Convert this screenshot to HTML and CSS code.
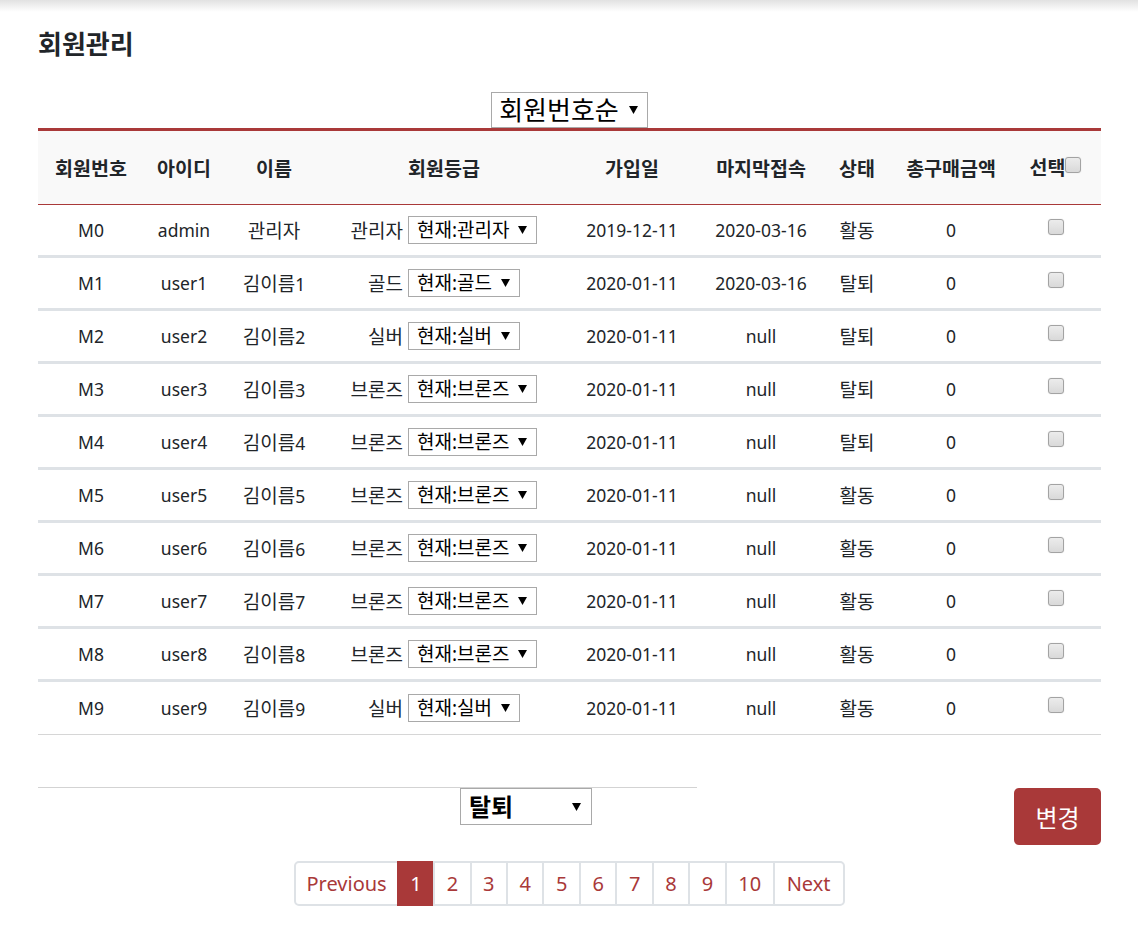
FILE: index.html
```html
<!DOCTYPE html>
<html lang="ko">
<head>
<meta charset="utf-8">
<title>회원관리</title>
<link rel="stylesheet" href="styles.css">
</head>
<body>
<div class="topbar"></div>
<div class="container">
  <h4 class="title">회원관리</h4>
  <div class="sort-wrap">
    <div class="sel sel-sort"><span class="sel-text">회원번호순</span><svg class="arrow" width="9" height="8" viewBox="0 0 9 8"><polygon points="0,0 9,0 4.5,8" fill="#000"/></svg></div>
  </div>
  <table class="members">
    <colgroup>
      <col style="width:106px"><col style="width:80px"><col style="width:100px"><col style="width:240px"><col style="width:136px"><col style="width:122px"><col style="width:70px"><col style="width:118px"><col style="width:91px">
    </colgroup>
    <thead>
      <tr>
        <th>회원번호</th><th>아이디</th><th>이름</th><th>회원등급</th><th>가입일</th><th>마지막접속</th><th>상태</th><th>총구매금액</th><th>선택<span class="cb cb-head"></span></th>
      </tr>
    </thead>
    <tbody>
      <tr><td>M0</td><td>admin</td><td class="ko">관리자</td><td><span class="grade"><span class="ko">관리자</span><span class="sel sel-row"><span class="sel-text">현재:관리자</span><svg class="arrow" width="9" height="8" viewBox="0 0 9 8"><polygon points="0,0 9,0 4.5,8" fill="#000"/></svg></span></span></td><td>2019-12-11</td><td>2020-03-16</td><td class="ko">활동</td><td>0</td><td><span class="cb"></span></td></tr>
      <tr><td>M1</td><td>user1</td><td><span class="ko">김이름</span>1</td><td><span class="grade"><span class="ko">골드</span><span class="sel sel-row"><span class="sel-text">현재:골드</span><svg class="arrow" width="9" height="8" viewBox="0 0 9 8"><polygon points="0,0 9,0 4.5,8" fill="#000"/></svg></span></span></td><td>2020-01-11</td><td>2020-03-16</td><td class="ko">탈퇴</td><td>0</td><td><span class="cb"></span></td></tr>
      <tr><td>M2</td><td>user2</td><td><span class="ko">김이름</span>2</td><td><span class="grade"><span class="ko">실버</span><span class="sel sel-row"><span class="sel-text">현재:실버</span><svg class="arrow" width="9" height="8" viewBox="0 0 9 8"><polygon points="0,0 9,0 4.5,8" fill="#000"/></svg></span></span></td><td>2020-01-11</td><td>null</td><td class="ko">탈퇴</td><td>0</td><td><span class="cb"></span></td></tr>
      <tr><td>M3</td><td>user3</td><td><span class="ko">김이름</span>3</td><td><span class="grade"><span class="ko">브론즈</span><span class="sel sel-row"><span class="sel-text">현재:브론즈</span><svg class="arrow" width="9" height="8" viewBox="0 0 9 8"><polygon points="0,0 9,0 4.5,8" fill="#000"/></svg></span></span></td><td>2020-01-11</td><td>null</td><td class="ko">탈퇴</td><td>0</td><td><span class="cb"></span></td></tr>
      <tr><td>M4</td><td>user4</td><td><span class="ko">김이름</span>4</td><td><span class="grade"><span class="ko">브론즈</span><span class="sel sel-row"><span class="sel-text">현재:브론즈</span><svg class="arrow" width="9" height="8" viewBox="0 0 9 8"><polygon points="0,0 9,0 4.5,8" fill="#000"/></svg></span></span></td><td>2020-01-11</td><td>null</td><td class="ko">탈퇴</td><td>0</td><td><span class="cb"></span></td></tr>
      <tr><td>M5</td><td>user5</td><td><span class="ko">김이름</span>5</td><td><span class="grade"><span class="ko">브론즈</span><span class="sel sel-row"><span class="sel-text">현재:브론즈</span><svg class="arrow" width="9" height="8" viewBox="0 0 9 8"><polygon points="0,0 9,0 4.5,8" fill="#000"/></svg></span></span></td><td>2020-01-11</td><td>null</td><td class="ko">활동</td><td>0</td><td><span class="cb"></span></td></tr>
      <tr><td>M6</td><td>user6</td><td><span class="ko">김이름</span>6</td><td><span class="grade"><span class="ko">브론즈</span><span class="sel sel-row"><span class="sel-text">현재:브론즈</span><svg class="arrow" width="9" height="8" viewBox="0 0 9 8"><polygon points="0,0 9,0 4.5,8" fill="#000"/></svg></span></span></td><td>2020-01-11</td><td>null</td><td class="ko">활동</td><td>0</td><td><span class="cb"></span></td></tr>
      <tr><td>M7</td><td>user7</td><td><span class="ko">김이름</span>7</td><td><span class="grade"><span class="ko">브론즈</span><span class="sel sel-row"><span class="sel-text">현재:브론즈</span><svg class="arrow" width="9" height="8" viewBox="0 0 9 8"><polygon points="0,0 9,0 4.5,8" fill="#000"/></svg></span></span></td><td>2020-01-11</td><td>null</td><td class="ko">활동</td><td>0</td><td><span class="cb"></span></td></tr>
      <tr><td>M8</td><td>user8</td><td><span class="ko">김이름</span>8</td><td><span class="grade"><span class="ko">브론즈</span><span class="sel sel-row"><span class="sel-text">현재:브론즈</span><svg class="arrow" width="9" height="8" viewBox="0 0 9 8"><polygon points="0,0 9,0 4.5,8" fill="#000"/></svg></span></span></td><td>2020-01-11</td><td>null</td><td class="ko">활동</td><td>0</td><td><span class="cb"></span></td></tr>
      <tr class="last"><td>M9</td><td>user9</td><td><span class="ko">김이름</span>9</td><td><span class="grade"><span class="ko">실버</span><span class="sel sel-row"><span class="sel-text">현재:실버</span><svg class="arrow" width="9" height="8" viewBox="0 0 9 8"><polygon points="0,0 9,0 4.5,8" fill="#000"/></svg></span></span></td><td>2020-01-11</td><td>null</td><td class="ko">활동</td><td>0</td><td><span class="cb"></span></td></tr>
    </tbody>
  </table>
  <div class="bottom-row">
    <div class="bottom-left">
      <div class="sel sel-status"><span class="sel-text">탈퇴</span><svg class="arrow" width="9" height="8" viewBox="0 0 9 8"><polygon points="0,0 9,0 4.5,8" fill="#000"/></svg></div>
    </div>
    <button class="btn-change">변경</button>
  </div>
  <ul class="pagination">
    <li><a class="page-link prev">Previous</a></li>
    <li><a class="page-link active">1</a></li>
    <li><a class="page-link">2</a></li>
    <li><a class="page-link">3</a></li>
    <li><a class="page-link">4</a></li>
    <li><a class="page-link">5</a></li>
    <li><a class="page-link">6</a></li>
    <li><a class="page-link">7</a></li>
    <li><a class="page-link">8</a></li>
    <li><a class="page-link">9</a></li>
    <li><a class="page-link">10</a></li>
    <li><a class="page-link next">Next</a></li>
  </ul>
</div>
</body>
</html>
```
FILE: styles.css
```css
* { box-sizing: border-box; }
body {
  margin: 0;
  background: #fff;
  color: #212529;
  font-family: "Noto Sans", "Noto Sans CJK KR", sans-serif;
}
.topbar {
  height: 12px;
  background: linear-gradient(#e1e1e1, #ffffff);
}
.container {
  padding: 0 37px 0 38px;
}
.title {
  margin: 17px 0 0 0;
  font-size: 26px;
  line-height: 30px;
  font-weight: 700;
  color: #212529;
}
.sort-wrap {
  margin-top: 33px;
  text-align: center;
  line-height: 0;
}
.sel {
  display: inline-flex;
  align-items: center;
  border: 1px solid #a9a9a9;
  background: #fff;
  color: #000;
  white-space: nowrap;
}
.sel .arrow { flex: none; }
.sel-sort {
  height: 36px;
  padding: 0 9px 0 7px;
  font-size: 26px;
  line-height: 34px;
}
.sel-sort .arrow { margin-left: 10px; }
.grade {
  display: inline-flex;
  align-items: center;
  vertical-align: middle;
}
.ko { font-size: 19px; }
.sel-row {
  height: 28px;
  margin-left: 5px;
  padding: 0 9px 0 8px;
  font-size: 19px;
  line-height: 26px;
}
.sel-row .arrow { margin-left: 9px; }
.members {
  width: 100%;
  table-layout: fixed;
  border-collapse: collapse;
  border-top: 3px solid #a93939;
  font-size: 17.5px;
}
.members th {
  height: 75px;
  background: #f9f9f9;
  border-bottom: 1px solid #a93939;
  font-size: 19.5px;
  font-weight: 700;
  padding: 0;
  text-align: center;
  vertical-align: middle;
  white-space: nowrap;
}
.members td {
  height: 52px;
  padding: 0;
  text-align: center;
  vertical-align: middle;
  white-space: nowrap;
}
.members td.ko { font-size: 19px; }
.members tbody tr + tr td { height: 53px; border-top: 3px solid #dee2e6; }
.members tbody tr.last td { height: 54px; border-bottom: 1px solid #d6d6d6; }
.cb {
  display: inline-block;
  width: 16px;
  height: 16px;
  border: 1px solid #a3a3a3;
  border-radius: 3px;
  background: linear-gradient(#ececec, #d9d9d9);
  box-shadow: 0 0 1px #c8c8c8;
  vertical-align: middle;
  margin-bottom: 8px;
}
.cb-head { margin-bottom: 10px; }
.bottom-row {
  margin-top: 52px;
  display: flex;
  justify-content: space-between;
  align-items: flex-start;
}
.bottom-left {
  width: 659px;
  border-top: 1px solid #d3d3d3;
  padding-left: 422px;
}
.sel-status {
  width: 132px;
  height: 37px;
  padding: 0 10px 0 8px;
  justify-content: space-between;
  font-size: 24px;
  font-weight: 700;
  line-height: 35px;
}
.btn-change {
  margin-top: 1px;
  width: 87px;
  height: 57px;
  border: none;
  border-radius: 5px;
  background: #a93939;
  color: #fff;
  font-family: "Noto Sans CJK KR", sans-serif;
  font-size: 24px;
  padding: 0;
}
.pagination {
  list-style: none;
  margin: 16px 0 0 0;
  padding: 0;
  display: flex;
  justify-content: center;
}
.pagination li + li { margin-left: -2px; }
.page-link {
  display: block;
  height: 45px;
  padding: 0 11.5px;
  border: 2px solid #dee2e6;
  color: #a93939;
  font-size: 20px;
  line-height: 41px;
  background: #fff;
}
.pagination li:first-child .page-link { border-radius: 5px 0 0 5px; }
.page-link.prev { padding: 0 10px; }
.page-link.next { padding: 0 12px; }
.pagination li:last-child .page-link { border-radius: 0 5px 5px 0; }
.page-link.active {
  background: #a93939;
  border-color: #a93939;
  color: #fff;
}
```
